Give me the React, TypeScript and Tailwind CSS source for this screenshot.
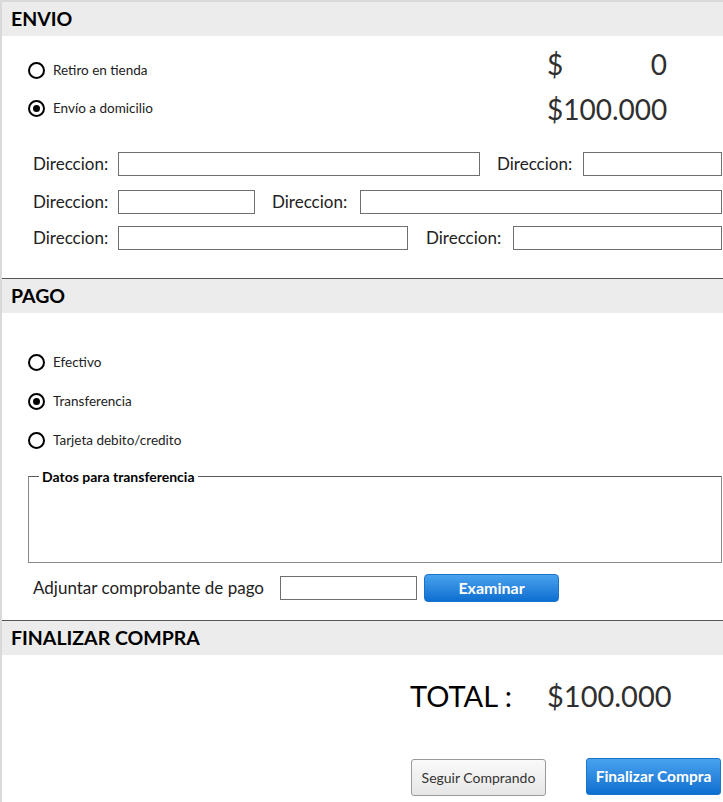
import React from 'react';

const font = { fontFamily: '"Lato", "Liberation Sans", sans-serif' };

function Radio({ checked, label }: { checked?: boolean; label: string }) {
  return (
    <div className="flex items-center gap-[8px] h-[17px]">
      <div className="w-[17px] h-[17px] rounded-full border-2 border-black flex items-center justify-center">
        {checked && <div className="w-[7px] h-[7px] rounded-full bg-black" />}
      </div>
      <span className="text-[13.5px] leading-[17px] text-[#222]">{label}</span>
    </div>
  );
}

function SectionHeader({ title }: { title: string }) {
  return (
    <div className="h-[34px] bg-[#ececec] flex items-center pl-[9px]">
      <h2 className="text-[19.5px] leading-[24px] font-bold text-black">{title}</h2>
    </div>
  );
}

function Field({ w }: { w: string }) {
  return <div className={`h-[24px] border border-[#6f6f6f] bg-white ${w}`} />;
}

function Label({ children, className = '' }: { children: React.ReactNode; className?: string }) {
  return <span className={`text-[17px] leading-[20px] text-[#222] ${className}`}>{children}</span>;
}

export default function App() {
  return (
    <div className="w-[723px] h-[802px] bg-white border-l-2 border-t-2 border-[#d9d9d9] overflow-hidden" style={font}>
      {/* Envio */}
      <SectionHeader title="ENVIO" />
      <div className="flex pt-[8px] pl-[26px]">
        <div className="flex flex-col gap-[21px] pt-[18px] w-[519px]">
          <Radio label="Retiro en tienda" />
          <Radio checked label="Envío a domicilio" />
        </div>
        <div className="flex flex-col w-[120px] text-[28px] text-[#2f2f2f] leading-[40px]">
          <div className="flex justify-between">
            <span>$</span>
            <span>0</span>
          </div>
          <div className="mt-[5px]">$100.000</div>
        </div>
      </div>

      <div className="flex flex-col pl-[31px] pt-[23px] pb-[28px]">
        <div className="flex items-center h-[24px]">
          <Label className="w-[85px]">Direccion:</Label>
          <Field w="w-[362px]" />
          <Label className="ml-[17px] w-[86px]">Direccion:</Label>
          <Field w="w-[139px]" />
        </div>
        <div className="flex items-center h-[24px] mt-[14px]">
          <Label className="w-[85px]">Direccion:</Label>
          <Field w="w-[137px]" />
          <Label className="ml-[17px] w-[88px]">Direccion:</Label>
          <Field w="w-[362px]" />
        </div>
        <div className="flex items-center h-[24px] mt-[12px]">
          <Label className="w-[85px]">Direccion:</Label>
          <Field w="w-[290px]" />
          <Label className="ml-[18px] w-[87px]">Direccion:</Label>
          <Field w="w-[209px]" />
        </div>
      </div>

      {/* Pago */}
      <div className="border-t border-[#555]">
        <SectionHeader title="PAGO" />
      </div>
      <div className="flex flex-col gap-[22px] pl-[26px] pt-[41px]">
        <Radio label="Efectivo" />
        <Radio checked label="Transferencia" />
        <Radio label="Tarjeta debito/credito" />
      </div>

      <fieldset className="ml-[26px] mr-[1px] mt-[20px] h-[94px] border border-[#5a5a5a] border-r-[#8a8a8a] border-b-[#8a8a8a] border-l-[#8a8a8a] px-[10px]">
        <legend className="text-[14px] font-bold text-black px-[3px] leading-[15px]">Datos para transferencia</legend>
      </fieldset>

      <div className="flex items-center h-[28px] pl-[31px] mt-[11px]">
        <Label className="w-[247px]">Adjuntar comprobante de pago</Label>
        <Field w="w-[137px]" />
        <button className="ml-[7px] w-[135px] h-[28px] rounded-[4px] border border-[#1a74c9] bg-gradient-to-b from-[#48a2ee] to-[#0a6fd0] text-white text-[16px] font-bold">
          Examinar
        </button>
      </div>

      {/* Finalizar */}
      <div className="border-t border-[#555] mt-[18px]">
        <SectionHeader title="FINALIZAR COMPRA" />
      </div>
      <div className="flex pl-[408px] pt-[21px] text-[29px] leading-[40px]">
        <span className="w-[137px] text-black">TOTAL :</span>
        <span className="text-[#2f2f2f]">$100.000</span>
      </div>
      <div className="flex pl-[409px] pt-[42px] items-start">
        <button className="mt-[1px] w-[135px] h-[37px] rounded-[3px] border border-[#9a9a9a] bg-gradient-to-b from-[#fafafa] to-[#e6e6e6] text-[14px] text-[#333]">
          Seguir Comprando
        </button>
        <button className="ml-[40px] w-[135px] h-[37px] rounded-[3px] border border-[#1a74c9] bg-gradient-to-b from-[#48a2ee] to-[#0a6fd0] text-white text-[15.5px] font-bold">
          Finalizar Compra
        </button>
      </div>
    </div>
  );
}
